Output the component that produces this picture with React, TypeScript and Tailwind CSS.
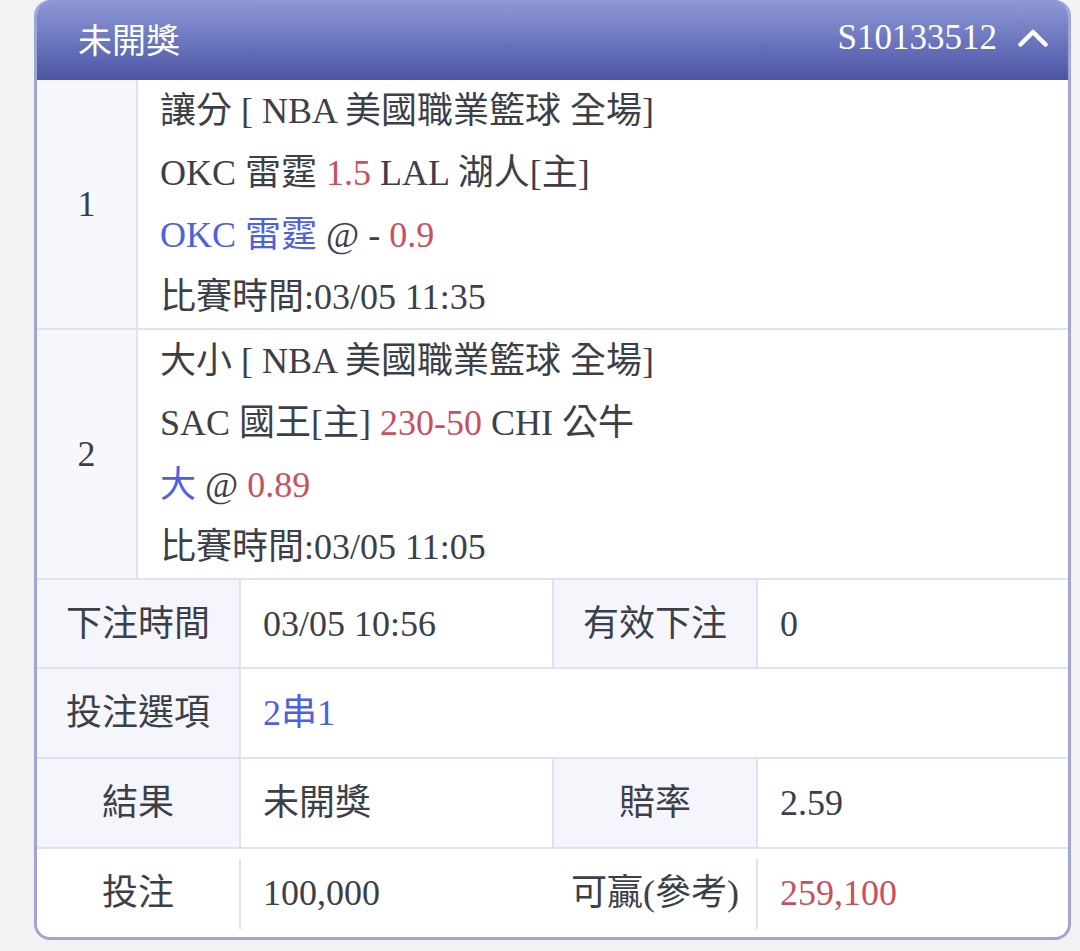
const font = 'font-["Liberation_Serif","Noto_Sans_CJK_TC",serif]';

type Match = {
  no: number;
  market: string;
  teams: React.ReactNode;
  pick: React.ReactNode;
  time: string;
};

const matches: Match[] = [
  {
    no: 1,
    market: '讓分 [ NBA 美國職業籃球 全場]',
    teams: (
      <>
        OKC 雷霆 <span className="text-[#c9505c]">1.5</span> LAL 湖人[主]
      </>
    ),
    pick: (
      <>
        <span className="text-[#4d60e0]">OKC 雷霆</span> @ - <span className="text-[#c9505c]">0.9</span>
      </>
    ),
    time: '03/05 11:35',
  },
  {
    no: 2,
    market: '大小 [ NBA 美國職業籃球 全場]',
    teams: (
      <>
        SAC 國王[主] <span className="text-[#c9505c]">230-50</span> CHI 公牛
      </>
    ),
    pick: (
      <>
        <span className="text-[#4d60e0]">大</span> @ <span className="text-[#c9505c]">0.89</span>
      </>
    ),
    time: '03/05 11:05',
  },
];

function MatchRow({ m }: { m: Match }) {
  return (
    <div className="flex border-b-2 border-[#e0e2f3]">
      <div className="w-[101px] shrink-0 flex items-center justify-center bg-[#f7f8fc] border-r-2 border-[#e0e2f3]">
        {m.no}
      </div>
      <div className="flex-1 pl-[22px] leading-[62px]">
        <div>{m.market}</div>
        <div>{m.teams}</div>
        <div>{m.pick}</div>
        <div>比賽時間:{m.time}</div>
      </div>
    </div>
  );
}

function Label({ children, border = true }: { children: React.ReactNode; border?: boolean }) {
  return (
    <div
      className={`flex items-center justify-center bg-[#f5f6fb] ${border ? 'border-r-2 border-[#e0e2f3]' : ''}`}
    >
      {children}
    </div>
  );
}

function Value({ children, border = true }: { children: React.ReactNode; border?: boolean }) {
  return (
    <div className={`flex items-center pl-[22px] ${border ? 'border-r-2 border-[#e0e2f3]' : ''}`}>
      {children}
    </div>
  );
}

export default function App() {
  return (
    <div className={`min-h-screen bg-[#f2f2f4] ${font} text-[36px] text-[#3c3f48]`}>
      <div className="ml-[34px] w-[1037px] rounded-[16px] border-x-[3px] border-b-[3px] border-[#a0a5d2] bg-white overflow-hidden">
        {/* header */}
        <div className="h-[80px] flex items-center justify-between pl-[41px] pr-[20px] pb-[4px] bg-linear-to-b from-[#8f99d8] to-[#4c55a4] text-white">
          <span className="text-[34px] font-['Noto_Sans_CJK_TC',sans-serif]">未開獎</span>
          <div className="flex items-center gap-[21px]">
            <span className="text-[35px]">S10133512</span>
            <svg width="30" height="18" viewBox="0 0 30 18" fill="none" stroke="currentColor" strokeWidth="4.5" strokeLinecap="round" strokeLinejoin="round">
              <polyline points="2.5,15.5 15,3 27.5,15.5" />
            </svg>
          </div>
        </div>

        {matches.map((m) => (
          <MatchRow key={m.no} m={m} />
        ))}

        {/* summary */}
        <div className="grid grid-cols-[204px_313px_204px_1fr] h-[87px]">
          <Label>下注時間</Label>
          <Value>03/05 10:56</Value>
          <Label>有效下注</Label>
          <Value border={false}>0</Value>
        </div>
        <div className="border-t-2 border-[#e0e2f3] grid grid-cols-[204px_1fr] h-[90px]">
          <Label>投注選項</Label>
          <Value border={false}>
            <span className="text-[#4d60e0]">2串1</span>
          </Value>
        </div>
        <div className="border-t-2 border-[#e0e2f3] grid grid-cols-[204px_313px_204px_1fr] h-[90px]">
          <Label>結果</Label>
          <Value>未開獎</Value>
          <Label>賠率</Label>
          <Value border={false}>2.59</Value>
        </div>
        <div className="border-t-2 border-[#e0e2f3] flex h-[90px]">
          <div className="w-[202px] flex items-center justify-center">投注</div>
          <div className="w-[2px] h-[70px] mt-[10px] bg-[#e0e2f3]" />
          <div className="w-[313px] flex items-center pl-[22px]">100,000</div>
          <div className="w-[202px] flex items-center justify-center">可贏(參考)</div>
          <div className="w-[2px] h-[70px] mt-[10px] bg-[#e0e2f3]" />
          <div className="flex-1 flex items-center pl-[22px] text-[#c9505c]">259,100</div>
        </div>
      </div>
    </div>
  );
}
